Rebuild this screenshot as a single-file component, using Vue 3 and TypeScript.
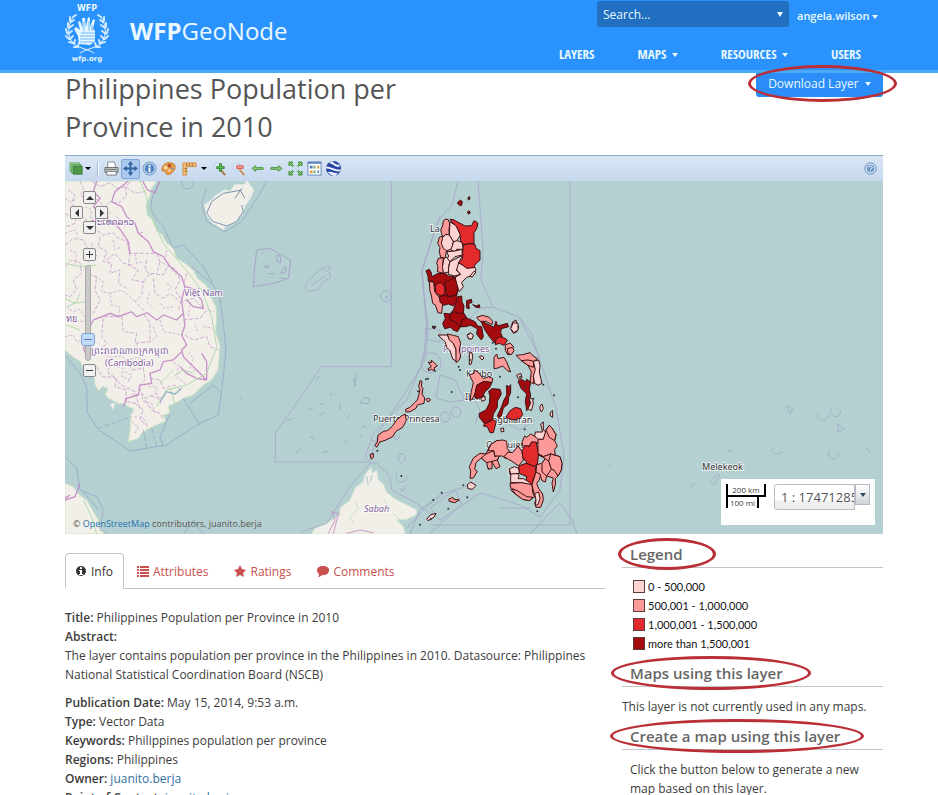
<script setup lang="ts">
import { ref } from 'vue'

interface Region {
  level: number
  points: string
}

const levels = ['#fbd3d3', '#fb9a99', '#e32a2c', '#a50b0e']

const legend = [
  { color: levels[0], label: '0 - 500,000' },
  { color: levels[1], label: '500,001 - 1,000,000' },
  { color: levels[2], label: '1,000,001 - 1,500,000' },
  { color: levels[3], label: 'more than 1,500,001' },
]

const parse = (rows: [number, string][]): Region[] =>
  rows.map(([level, points]) => ({ level, points }))

// Northern provinces
const north = parse([
  [1, '130,122 138,117 145,119 149,130 147,150 148,165 138,163 128,172 125,160 122,150 128,138'],
  [1, '118,172 128,168 130,190 140,210 135,235 122,232 118,215 120,203 113,190'],
  [1, '115,235 130,234 128,260 131,280 112,275 114,260 110,250'],
  [0, '150,125 172,140 176,155 182,165 172,180 170,186 158,183 148,165'],
  [0, '128,172 138,163 148,165 160,185 158,195 155,207 140,212 130,205 124,190'],
  [0, '160,185 172,182 186,187 190,208 170,208 165,215 152,210 158,195'],
  [0, '140,215 165,213 186,208 187,225 165,230 150,245 141,238 146,228'],
  [0, '132,235 140,232 150,245 145,262 148,275 131,280 127,262'],
  [0, '150,245 188,226 176,248 178,262 168,270 182,283 163,288 145,283 146,262'],
  [0, '176,248 200,263 225,262 228,270 215,288 200,292 185,307 190,320 178,335 170,320 165,292 182,283 170,270'],
  [2, '150,118 160,119 195,138 215,137 222,122 228,125 234,130 230,146 222,158 222,192 206,190 192,195 182,183 180,160 168,138 156,126'],
  [2, '190,195 210,191 225,193 228,205 240,212 240,240 225,254 222,263 200,265 188,255 176,248 188,236 188,218'],
  [0, '210,288 222,274 228,276 216,292'],
  [3, '78,272 88,268 93,276 96,290 112,281 136,280 145,288 165,290 166,306 174,325 170,345 150,350 125,350 108,338 104,318 100,303 85,304 84,288'],
  [3, '135,305 150,300 165,292 174,325 170,346 148,350 138,338'],
  [2, '105,320 112,310 122,308 134,320 135,338 125,348 108,342'],
  [1, '88,305 101,306 104,335 116,350 128,372 125,400 114,398 106,375 98,370 94,345 90,335'],
  [3, '118,350 134,345 148,350 170,346 174,366 160,378 145,372 130,376 120,366'],
  [3, '174,350 185,348 186,365 192,378 190,398 200,414 225,425 233,438 245,440 250,470 244,480 230,462 232,446 212,436 196,440 182,440 172,455 160,450 152,442 134,446 128,430 136,416 132,400 150,402 160,390 166,374'],
  [3, '150,402 165,395 180,402 190,398 200,414 186,420 180,440 165,425 150,420'],
  [3, '242,422 262,432 282,442 288,424 293,438 322,430 326,440 304,446 302,458 310,478 292,480 285,490 268,470 255,450'],
  [1, '230,412 248,406 268,412 278,424 276,434 258,424 240,424'],
  [2, '288,478 300,470 318,476 322,482 312,496 298,490 286,494'],
  [1, '316,495 330,489 341,500 334,508 337,520 324,525 316,512'],
  [0, '338,426 348,420 350,432 356,440 350,456 340,460 332,446'],
  [3, '200,362 214,358 216,368 206,370 208,386 200,384'],
  [3, '172,68 182,60 187,66 184,77 176,74'],
  [3, '204,52 209,50 209,58 205,60'],
  [3, '202,96 207,92 211,98 206,103'],
  [3, '218,374 228,378 238,374 240,382 228,382'],
  [3, '98,438 106,440 104,446 98,444'],
  [0, '202,464 210,459 219,464 216,476 206,477'],
])

// Palawan, Visayas and Mindanao
const south = parse([
  [0, '234,45 262,45 268,58 280,70 288,88 290,124 278,117 270,92 260,82 256,66'],
  [1, '262,42 280,46 295,50 302,70 298,90 302,108 298,120 288,128 288,88 280,70 268,60'],
  [1, '205,126 214,128 214,120 226,132 232,138 222,144 226,154 214,148 206,152 204,146 214,140'],
  [1, '176,226 180,208 176,200 180,182 186,184 184,198 189,206 186,222 194,234 192,250 172,255 168,265 150,275 138,276 137,268 150,262 164,248 172,240'],
  [1, '45,376 52,366 54,346 70,334 82,332 96,320 110,300 124,288 136,282 139,302 128,322 108,334 98,350 78,360 60,366 50,382'],
  [1, '198,238 206,234 212,240 204,246'],
  [1, '30,404 40,400 40,412 34,418'],
  [1, '402,112 410,102 414,116 432,112 440,126 452,156 442,152 428,138 414,144 402,146'],
  [0, '328,98 336,98 338,110 334,132 328,134'],
  [0, '358,110 366,107 372,114 366,120'],
  [0, '322,46 332,39 340,46 336,57 326,56'],
  [1, '468,106 488,104 510,98 520,108 532,116 522,124 530,145 520,168 522,192 510,186 514,155 504,136 484,122'],
  [1, '484,122 504,120 522,124 520,142 504,136'],
  [0, '520,124 536,120 540,136 538,156 546,190 534,196 524,190 520,168 526,148'],
  [3, '474,184 484,178 498,186 500,178 512,186 508,208 512,226 508,246 514,264 500,268 496,244 500,222 484,206'],
  [0, '506,232 518,238 520,252 514,272 504,266 512,250'],
  [0, '470,166 482,160 486,172 476,178'],
  [1, '328,165 342,160 342,150 354,156 370,176 386,170 398,176 396,188 372,184 350,196 348,216 336,238 330,242 334,214 340,188'],
  [3, '350,196 372,184 396,188 388,204 376,214 366,232 348,236 344,226'],
  [0, '362,235 374,228 376,240 366,244'],
  [3, '386,214 396,206 420,208 424,222 412,244 412,262 400,282 398,298 384,306 374,312 358,292 358,280 378,270 388,250 390,228'],
  [2, '374,312 386,306 400,298 408,308 400,338 390,338 382,320 370,318'],
  [3, '440,196 446,200 452,194 452,218 446,232 444,252 430,264 424,288 416,294 412,288 424,262 432,240 440,226'],
  [2, '438,292 450,272 466,262 482,266 488,284 480,294 462,300 448,296'],
  [1, '330,475 332,454 328,440 340,414 360,400 378,402 390,376 410,362 424,368 428,392 420,404 412,420 420,440 408,446 396,426 396,446 384,446 380,428 364,414 348,428 344,448 352,454 340,474'],
  [1, '378,402 402,392 404,410 420,404 412,420 396,424 380,428 364,414'],
  [1, '410,362 428,360 440,364 442,386 450,396 438,416 426,408 404,408 402,392 384,392 392,374'],
  [1, '444,396 458,398 474,378 486,394 490,420 476,438 456,424 432,410'],
  [1, '486,366 494,348 500,352 512,342 526,350 536,356 534,370 516,366 508,378 488,378'],
  [2, '486,392 496,376 508,380 514,366 528,366 536,400 532,434 520,440 502,430 494,420 488,410'],
  [0, '524,348 526,336 548,336 542,312 550,306 550,330 558,336 550,358 534,358'],
  [1, '534,358 550,358 558,330 568,316 576,324 588,344 584,362 592,378 584,388 586,408 572,402 550,410 534,400'],
  [1, '558,330 568,316 576,324 588,344 584,362 568,352'],
  [2, '476,438 498,430 526,440 528,460 520,476 516,494 498,486 500,470 478,460'],
  [0, '452,462 468,458 478,466 474,476 490,476 510,488 516,496 484,488 452,488'],
  [0, '448,446 464,440 476,446 478,460 452,462'],
  [1, '450,490 484,488 516,494 518,518 524,530 508,542 488,538 466,522 454,512'],
  [1, '456,506 472,512 500,530 520,532 508,542 488,538 466,522'],
  [1, '534,404 550,410 572,402 600,410 606,430 604,450 594,468 586,476 586,494 580,516 576,490 580,474 560,468 556,486 546,482 540,464 528,456 530,434 546,430 556,416'],
  [1, '572,402 600,410 606,430 604,450 594,468 582,450 574,448 566,424'],
  [1, '546,430 556,416 566,424 574,448 560,468 546,456'],
  [1, '528,456 542,464 538,480 530,490 536,506 548,522 550,540 542,562 528,562 524,548 530,536 522,520 516,494'],
  [0, '524,520 536,516 540,536 534,554 526,556 528,540'],
  [0, '322,494 332,486 348,496 338,508 324,506'],
  [1, '266,538 278,532 282,538 298,540 284,548 268,544'],
  [0, '200,598 212,584 228,580 222,592 204,602'],
  [0, '540,258 546,252 550,266 544,276 540,268'],
  [0, '572,276 578,272 578,292 570,286'],
  [0, '422,326 430,324 432,334 424,336'],
  [1, '442,86 458,82 462,92 454,104 444,100'],
  [0, '460,8 474,10 474,30 462,38 452,26'],
])

const specks = [
  [222, 22], [226, 20], [198, 178], [204, 176], [275, 216], [296, 140], [330, 120], [124, 468],
  [245, 518], [220, 540], [310, 496], [322, 532], [265, 566], [180, 614], [480, 170], [474, 232],
  [550, 194], [582, 226], [532, 574], [52, 392], [212, 598], [420, 170], [495, 200], [386, 446],
  [500, 270], [174, 214], [520, 236], [494, 328], [408, 86], [440, 200], [300, 150], [398, 68],
]

const mainland =
  'M15,-267 L290,-267 L272,-240 L270,-222 L258,-195 L262,-165 L278,-150 L290,-118 L305,-108 L320,-82 L340,-65 L350,-35 L375,-20 L400,0 L412,25 L438,45 L452,80 L468,110 L470,150 L466,185 L480,225 L478,255 L474,300 L455,330 L430,345 L400,375 L370,385 L345,400 L325,408 L330,430 L310,435 L318,452 L290,465 L262,478 L245,490 L235,505 L205,515 L210,480 L212,435 L222,418 L205,410 L190,400 L178,402 L160,392 L145,385 L135,372 L145,355 L128,350 L115,362 L105,345 L100,310 L90,295 L70,300 L62,275 L40,262 L15,240 Z'

const inlandBorders = [
  'M60,-267 L72,-240 L60,-225 L85,-205 L110,-212 L135,-190 L150,-205 L175,-200 L200,-222 L195,-250 L215,-267',
  'M95,-267 L120,-250 L150,-262 L170,-245 L195,-250 L225,-230 L255,-235',
  'M15,-170 L35,-158 L60,-165 L80,-150 L70,-120 L90,-110 L110,-120 L130,-105 L160,-112 L175,-95 L205,-85',
  'M15,-75 L40,-95 L70,-90 L85,-60 L70,-40 L90,-20 L80,10 L110,20 L105,60 L120,90 L100,130',
  'M15,-10 L35,-30 L60,-22 L65,10 L40,30 L50,60 L30,80 L15,75',
  'M120,-100 L115,-70 L140,-55 L130,-25 L155,-20 L150,10 L180,0 L175,40 L200,55',
  'M205,-50 L290,-50 L300,-25 L330,-10 L350,15',
  'M200,-85 L210,-50 L205,-15 L235,0 L215,30 L250,35 L245,75 L225,95 L255,125',
  'M100,150 L130,140 L185,140 L190,185 L230,190 L225,220 L270,215 L270,160 L250,130',
  'M130,145 L125,200 L140,220 L120,240',
  'M250,35 L270,10 L310,15 L325,-15 L350,0 L360,30 L345,60 L365,90 L355,120',
  'M280,25 L285,70 L310,85 L330,70 L360,95 L400,85 L425,110',
  'M380,10 L370,45 L395,60 L420,55',
  'M150,270 L145,310 L170,325 L165,350 L200,360 L195,395 L230,400',
  'M200,270 L215,300 L250,295 L255,330 L235,350 L255,385 L290,370 L300,395',
  'M110,290 L125,320 L160,322 L185,345 L225,365 L240,420',
  'M225,400 L250,420 L240,450 L265,470',
  'M255,390 L275,420 L300,430 L310,450',
  'M270,325 L300,330 L310,355 L345,345 L360,360',
  'M375,195 L400,210 L440,200 L450,230 L475,240',
  'M370,150 L420,145 L440,120 L462,125',
  'M170,-160 L190,-135 L225,-140 L235,-110 L255,-115',
  'M25,-240 L45,-225 L35,-200 L55,-180 L45,-140 L20,-130',
  'M140,-30 L165,-50 L190,-20 L215,-15',
  'M260,-30 L255,0 L275,15 M300,-25 L290,10',
]

const minorBorders = [
  'M15,-215 L30,-205 L50,-212 M75,-190 L95,-180 L90,-155 L115,-150 L125,-135 M150,-175 L140,-150 L155,-140',
  'M15,-110 L45,-120 L55,-100 M30,-60 L50,-50 L45,-15 M95,-80 L100,-50 L115,-40',
  'M160,-90 L165,-60 L185,-70 M225,-50 L230,-20 L250,-25 M320,-60 L315,-30',
  'M20,110 L40,125 L60,118 L75,140 M15,200 L40,195 L50,215 L70,210 M35,150 L60,155 L85,150',
  'M105,20 L130,35 L125,65 L150,70 L155,105 L180,110 L175,138 M150,70 L185,60 L205,75 L225,95',
  'M300,150 L310,185 L340,190 L365,195 M280,170 L290,200 L270,215 M230,220 L240,245 L280,240 L300,255',
  'M115,245 L150,262 L185,258 L200,270 L235,262 L255,275 L250,295 M160,285 L190,295 L185,320 L210,330',
  'M205,280 L220,275 L230,290 M195,305 L215,315 L205,335 M265,350 L290,350 L285,368 M275,380 L305,385 L300,405',
  'M215,375 L245,372 L250,395 L275,400 L285,430 M225,440 L250,445 L260,465 M215,455 L235,470 L225,490',
  'M385,245 L400,265 L390,290 L405,305 M405,165 L415,190 M430,170 L460,175 M390,105 L385,140',
  'M340,110 L310,115 L300,95 M320,40 L335,50 L320,65 M270,70 L260,95 L280,115 M330,270 L355,285 L350,320 L380,345',
]

const nationalBorders = [
  'M248,-267 L262,-240 L285,-232 L300,-267',
  'M205,-267 L165,-235 L155,-205 L185,-190 L200,-160 L225,-140 L235,-110 L265,-85 L280,-55 L310,-40 L330,-10 L365,20 L375,50 L365,90 L370,130 L350,150 L310,135 L290,150 L262,128 L230,140 L215,125 L175,140 L150,130 L100,150 L85,180 L100,205 L70,235 L85,270',
  'M110,-267 L100,-235 L120,-215 L100,-190 L125,-165 L165,-140 L185,-115 L205,-85 L210,-50',
  'M370,130 L375,165 L365,195 L380,225 L365,240 L370,260 L440,330',
  'M440,330 L440,275 L425,250 M365,245 L340,270 L310,275 L300,300 L270,310 L275,340 L240,345 L235,375 L200,385 L190,410',
  'M380,90 L400,110 L430,115 L425,90 L395,55 L375,50',
  'M360,290 L380,310 L410,325 L440,330',
  'M30,675 L15,685 M15,690 L45,680 L60,640',
]

const zoomLevel = ref(83)
const activeTab = ref('Info')
const tabs = ['Info', 'Attributes', 'Ratings', 'Comments']
const pans = ['up', 'left', 'right', 'down']
</script>

<template>
  <div class="page">
    <header class="header">
      <a class="brand" href="#">
        <svg class="logo" viewBox="0 0 46 64" aria-hidden="true">
          <g fill="none" stroke="#dff3ff" stroke-linecap="round">
            <path d="M10,15 C3,23 2,39 13,45 C19,48 26,49 30,52" stroke-width="1" />
            <path d="M36,15 C43,23 44,39 33,45 C27,48 20,49 16,52" stroke-width="1" />
            <path d="M9,16l3,-2M6,20l0,-4M7,21l3,-2M4,26l0,-4M5,27l4,-3M3,32l-1,-4M4,33l4,-3M5,38l-3,-3M6,38l3,-3M9,42l-4,-1M10,43l1,-4M14,46l-4,0M14,45l1,-3" stroke-width="2" opacity="0.9" />
            <path d="M37,16l-3,-2M40,20l0,-4M39,21l-3,-2M42,26l0,-4M41,27l-4,-3M43,32l1,-4M42,33l-4,-3M41,38l3,-3M40,38l-3,-3M37,42l4,-1M36,43l-1,-4M32,46l4,0M32,45l-1,-3" stroke-width="2" opacity="0.9" />
          </g>
          <path d="M15,43 L14,35 L10,28 L12,26 L16,29 L14,21 L16,20 L19,27 L18,17 L21,17 L22,26 L24,16 L26,17 L26,26 L29,18 L31,19 L29,28 L31,30 L31,40 L26,44 Z" fill="#e6f6ff" />
          <path d="M17,32H31M16,35H31M16,38H31M16,41H29" stroke="#6db7fb" stroke-width="1" />
          <path d="M20,20V30M25,20V30M28,24V30" stroke="#6db7fb" stroke-width="1" />
          <text x="23" y="10" text-anchor="middle" class="logo-top">WFP</text>
          <text x="23" y="60" text-anchor="middle" class="logo-bottom">wfp.org</text>
        </svg>
        <span class="site-name"><b>WFP</b>GeoNode</span>
      </a>
      <div class="header-side">
        <div class="user-row">
          <label class="search">
            <input type="text" placeholder="Search..." aria-label="Search" />
            <i class="caret"></i>
          </label>
          <a class="user" href="#">angela.wilson <i class="caret"></i></a>
        </div>
        <nav class="nav">
          <a href="#">LAYERS</a>
          <a href="#">MAPS <i class="caret"></i></a>
          <a href="#">RESOURCES <i class="caret"></i></a>
          <a href="#">USERS</a>
        </nav>
      </div>
    </header>

    <main class="content">
      <div class="title-row">
        <h1>Philippines Population per Province in 2010</h1>
        <div class="marked mark-download">
          <button class="download" type="button">Download Layer <i class="caret"></i></button>
        </div>
      </div>

      <section class="viewer">
        <div class="toolbar">
          <button type="button" class="tool wide" aria-label="Layers">
            <svg viewBox="0 0 16 16"><rect x="1" y="2" width="10" height="9" fill="#a4d3a0" stroke="#6aad69" /><rect x="3" y="4" width="10" height="9" fill="#7fbf7a" stroke="#4f984e" /><rect x="5" y="6" width="9" height="8" fill="#4e9a4d" stroke="#397d3a" /></svg>
            <i class="caret dark"></i>
          </button>
          <span class="separator"></span>
          <button type="button" class="tool" aria-label="Print">
            <svg viewBox="0 0 16 16"><path d="M4,7V1H11L12,3V7" fill="#fff" stroke="#888" /><path d="M1,7H15V12H1Z" fill="#c3c8ce" stroke="#666" /><path d="M3,11H13V15H3Z" fill="#fff" stroke="#777" /><path d="M2,9H14" stroke="#777" /></svg>
          </button>
          <button type="button" class="tool active" aria-label="Pan">
            <svg viewBox="0 0 16 16"><path d="M8,3V13M3,8H13" stroke="#3465a0" stroke-width="2" /><path d="M8,0L11,4H5ZM8,16L5,12H11ZM0,8L4,5V11ZM16,8L12,11V5Z" fill="#3465a0" /></svg>
          </button>
          <button type="button" class="tool" aria-label="Feature information">
            <svg viewBox="0 0 16 16"><circle cx="8" cy="8" r="7" fill="#b8cfe8" stroke="#6f99c8" /><circle cx="8" cy="8" r="5" fill="#4e86c2" /><path d="M7,7H9V12H7ZM7,4H9V6H7Z" fill="#fff" /></svg>
          </button>
          <button type="button" class="tool" aria-label="Styles">
            <svg viewBox="0 0 16 16"><path d="M1,9C1,4 6,1 11,2C16,3 16,8 13,11C11,14 8,15 6,14C4,13 6,11 4,11C2,11 1,11 1,9Z" fill="#e9a04b" stroke="#c37624" /><circle cx="5" cy="7" r="2" fill="#f7dfa9" /><circle cx="9" cy="5" r="2" fill="#b84d2b" /><circle cx="12" cy="8" r="1" fill="#5b8fc5" /><circle cx="9" cy="10" r="1" fill="#fff" /></svg>
          </button>
          <button type="button" class="tool wide measure" aria-label="Measure">
            <svg viewBox="0 0 16 16"><path d="M1,2H15V6H5V15H1Z" fill="#f0b974" stroke="#cf8f43" /><path d="M5,3V5M8,3V5M11,3V5M3,8H5M3,11H5" stroke="#8e5a1d" /></svg>
            <i class="caret dark"></i>
          </button>
          <button type="button" class="tool" aria-label="Zoom in">
            <svg viewBox="0 0 16 16"><circle cx="6" cy="6" r="4" fill="#dcebf7" stroke="#b9cde2" /><path d="M10,10L14,15" stroke="#a87b3d" stroke-width="2" /><path d="M8,3H10V6H13V8H10V11H8V8H5V6H8Z" fill="#5cbb50" stroke="#2f8a31" /></svg>
          </button>
          <button type="button" class="tool" aria-label="Zoom out">
            <svg viewBox="0 0 16 16"><circle cx="6" cy="6" r="4" fill="#dcebf7" stroke="#b9cde2" /><path d="M9,9L14,15" stroke="#cc8e58" stroke-width="2" /><path d="M6,5H13V8H6Z" fill="#f09a94" stroke="#df5a54" /></svg>
          </button>
          <button type="button" class="tool" aria-label="Previous extent">
            <svg viewBox="0 0 16 16"><path d="M2,8L6,5V7H14V9H6V11Z" fill="#8cc97a" stroke="#4a964a" /></svg>
          </button>
          <button type="button" class="tool" aria-label="Next extent">
            <svg viewBox="0 0 16 16"><path d="M14,8L10,5V7H2V9H10V11Z" fill="#8cc97a" stroke="#4a964a" /></svg>
          </button>
          <button type="button" class="tool" aria-label="Full extent">
            <svg viewBox="0 0 16 16" fill="#7dbd6a" stroke="#3f8f3d"><path d="M1,1H5L4,3L6,5L5,6L3,4L1,5ZM15,1V5L13,4L11,6L10,5L12,3L11,1ZM1,15V11L3,12L5,10L6,11L4,13L5,15ZM15,15H11L12,13L10,11L11,10L13,12L15,11Z" /></svg>
          </button>
          <button type="button" class="tool" aria-label="Legend">
            <svg viewBox="0 0 16 16"><rect x="1" y="1" width="14" height="14" fill="#fff" stroke="#5f86b5" /><path d="M1,2H15" stroke="#5f86b5" stroke-width="2" /><path d="M3,5H6V8H3Z" fill="#4b7bc0" /><path d="M7,5H9V8H7ZM7,10H9V13H7Z" fill="#68a95e" /><path d="M11,5H13V8H11ZM3,10H6V13H3Z" fill="#d99b3a" /><path d="M11,10H13V13H11Z" fill="#6f93c4" /></svg>
          </button>
          <button type="button" class="tool" aria-label="3D view">
            <svg viewBox="0 0 16 16"><circle cx="8" cy="8" r="8" fill="#2546a5" /><path d="M0,6C4,5 9,10 16,9L15,11C9,12 4,7 0,8ZM3,2C8,3 10,7 15,6L14,4C10,4 8,2 7,0ZM2,12C6,10 9,14 13,13L10,16C6,16 4,14 2,12Z" fill="#e9f0fb" /></svg>
          </button>
          <button type="button" class="tool help" aria-label="Help">
            <svg viewBox="0 0 16 16"><circle cx="8" cy="8" r="6" fill="#dbe7f4" stroke="#5583b8" /><circle cx="8" cy="8" r="4" fill="#6b97c8" /><path d="M6,7C6,5 10,5 10,7C10,8 8,8 8,9M8,10V11" fill="none" stroke="#fff" /></svg>
          </button>
        </div>

        <div class="map">
          <svg class="map-canvas" viewBox="65 181 818 353" role="img" aria-label="Population map">
            <rect x="65" y="181" width="818" height="353" fill="#b5d0d0" />

            <!-- Indochina -->
            <g transform="translate(60 270) scale(0.33333)">
              <path :d="mainland" fill="#f2efe9" stroke="#c9e3c3" stroke-width="3" />
              <path d="M150,402 L165,398 L160,420 Z" fill="#f2efe9" />
              <path d="M15,640 L40,650 L55,672 L80,690 L100,725 L115,750 L120,775 L135,792 L15,792 Z" fill="#f2efe9" stroke="#c9e3c3" stroke-width="3" />
              <g fill="none" stroke="#c9a6cf" stroke-width="3">
                <path v-for="line in inlandBorders" :key="line" :d="line" stroke-dasharray="12 5" opacity="0.9" />
                <path v-for="line in minorBorders" :key="line" :d="line" stroke-dasharray="8 5" opacity="0.8" />
                <path v-for="line in nationalBorders" :key="line" :d="line" stroke="#c793c8" stroke-width="4" />
              </g>
              <g fill="none" stroke="#b3d9ad" stroke-width="3">
                <path d="M15,85 L45,100 L75,95 M25,110 L50,95 L60,70 M15,-20 L60,-10 L110,-15 M20,165 L60,180" />
                <path d="M240,-267 L255,-235 L275,-160 L310,-80 L370,-10 L425,60 L455,140 L470,230 L440,310 L380,345 L320,360 L290,410 M300,340 L340,300 M330,355 L345,400" />
                <path d="M70,690 L95,740 L110,792 M340,320 L370,300 L400,310" />
              </g>
              <path d="M300,395 L320,365 L345,372 L365,355" fill="none" stroke="#8db0c6" stroke-width="4" />
              <g fill="none" stroke="#96a0c6" stroke-width="3" opacity="0.7">
                <path d="M395,-10 L460,45 L480,85 L490,160 L498,240 L490,320 L475,435 L410,465 L320,525 L210,543 L115,478 L82,430 L80,350 L60,310 L15,255" />
                <path d="M300,-267 C250,-180 280,-165 310,-130 L340,-65 L370,-75 L430,-10 L460,45" />
                <path d="M365,-267 C360,-235 405,-235 400,-267" />
                <path d="M440,-245 L425,-200 L440,-145 L495,-115 L545,-145 L600,-230 L620,-267" />
                <path d="M330,430 L300,500 L308,525 M370,385 L420,465 M390,400 L460,345 L480,365" />
                <path d="M115,475 L215,440 M250,480 L260,535 M275,475 L290,530" stroke-dasharray="14 6" />
                <path d="M15,560 L50,595 L60,660 L110,680 L130,720 L120,780 L145,792 M70,665 L115,720 M370,792 L400,750 L430,792" />
              </g>
              <path d="M440,-165 L435,-195 L455,-210 L470,-225 L495,-240 L510,-235 L525,-255 L555,-255 L560,-268 L580,-240 L570,-215 L555,-195 L545,-165 L520,-140 L495,-130 L490,-122 L460,-140 Z" fill="#f2efe9" stroke="#e6ede6" stroke-width="4" />
              <path d="M440,-170 L455,-205 L490,-230 L545,-240 M545,-245 L525,-215 M540,-240 L555,-215 M545,-195 L550,-175 L530,-145 L500,-132 L460,-145 L440,-170" fill="none" stroke="#7d93b2" stroke-width="3" />
              <g fill="none" stroke="#a195c6" stroke-width="3" opacity="0.7">
                <path d="M590,-60 L630,-65 L692,-30 L685,25 L640,40 L580,50 L582,15 Z" />
                <path d="M650,-45 l12,4 v20 l-10,-4z M660,10 l18,-22 -2,20z M610,-10 l14,-4 2,8z M625,10 l20,2 M605,-48 l6,-2 M660,25 l16,0" />
                <path d="M735,55 C740,20 770,15 785,-5 L808,8 L812,22 L790,35 L775,58 L745,65 Z M785,-5 L810,-10 L808,8 M755,45 L800,15" stroke-dasharray="7 3" />
              </g>
            </g>

            <!-- Borneo and the South China Sea -->
            <g transform="translate(240 180) scale(0.33333)">
              <path d="M215,1062 L225,1045 L260,1030 L300,1005 L300,985 L330,960 L345,925 L370,905 L375,885 L392,862 L398,880 L410,870 L415,900 L430,912 L438,935 L462,955 L490,970 L530,990 L528,1005 L500,1018 L470,1020 L490,1040 L495,1062 Z" fill="#f2efe9" stroke="#d3e6d0" stroke-width="3" />
              <path d="M345,960 L355,985 L330,1010 L340,1030 M430,955 L450,985 M460,1000 L480,1020" fill="none" stroke="#b3d9ad" stroke-width="2" />
              <path d="M265,1060 L285,1020 L275,995 L295,1000 L280,1062 M320,1060 L360,1050 L400,1058" fill="none" stroke="#c79aca" stroke-width="3" />
              <path d="M380,890 L385,915 M395,885 L392,905" fill="none" stroke="#b5d0d0" stroke-width="4" />
              <g fill="none" stroke="#a39fc9" stroke-width="3" opacity="0.7">
                <path d="M454,0 V560 H245 L106,760 V846 H390" />
                <circle cx="438" cy="349" r="16" /><circle cx="440" cy="351" r="3" />
                <path d="M185,1055 L260,1030 L330,920 L390,850 L410,848 L450,890 L455,930 L530,970 L570,1000" />
                <path d="M600,110 L545,270 L560,440 L550,540 L500,660 L400,760 L376,830 L390,846" />
                <path d="M350,580 l-6,38 M340,595 l6,22 M230,600 l8,-12 M360,668 l14,-16 16,4 -8,16z M235,710 l20,-15 M140,722 l18,-6 M205,690 l12,-4 M270,640 l6,8 M300,670 l0,20 M168,820 l12,-14 M245,818 l20,-4 M365,742 l14,-4 M210,770 l14,6 M310,780 l10,10 M360,765 l6,4 M240,670 l10,4 M325,715 l4,-12 M395,780 l10,6" stroke="#8fa0bf" />
                <path d="M475,830 C480,815 500,820 495,840 C485,855 475,850 475,830 M472,880 a16,16 0 1 0 28,8 M480,925 a8,8 0 1 0 12,-8 M465,765 a8,8 0 1 0 10,0" />
                <path d="M0,660 l5,-6 M500,1045 L560,980 L600,950" />
              </g>
            </g>

            <!-- Sea boundaries around the islands -->
            <g fill="none" stroke="#a39fc9" stroke-width="1" opacity="0.7">
              <path d="M570,181 V525 M430,525 H570 M458,181 L452,205 L437,222 L422,272 L428,330 L425,360" />
              <path d="M478,181 L483,248 L481,280 L493,307 L519,317 L531,333 L543,370 L556,408 L564,455 L560,490 L540,517 L520,505 L480,493 L455,510 L430,534" />
              <path d="M493,307 L480,308 L470,318 L478,330 M519,317 L540,358 L524,362 M425,360 L404,395 L380,430 L370,458" />
              <path d="M410,534 L420,510 L440,495 L470,485 M530,534 L545,518 L560,503 L572,520 L577,534 M500,508 L530,508" />
              <circle cx="445" cy="417" r="5" /><circle cx="456" cy="412" r="5" /><circle cx="431" cy="363" r="10" />
              <path d="M440,375 L455,380 L465,400 L450,402 L436,398 Z M425,328 L440,330 L440,342 L428,340 Z M470,390 L480,410 L475,425 M500,420 L520,430 L535,420 M430,508 L455,490 L462,505 L440,520 Z" />
            </g>

            <!-- Palau and nearby reefs -->
            <g fill="none" stroke="#9fa6c6" stroke-width="1" opacity="0.65">
              <path d="M716,475 l-6,6 4,4 6,-10z M774,447 a5,4 0 1 0 8,4 M728,449 a2,2 0 1 0 4,1 M830,450 a5,5 0 1 0 8,2 M787,406 l6,3 -3,5z M817,414 a6,6 0 1 0 12,0 M832,408 a5,5 0 1 0 8,2 M838,424 l6,5 -6,3z M803,506 l5,3" />
              <path d="M866,448 l4,5 M690,487 l5,-4 M606,463 l5,4" />
            </g>

            <g class="labels">
              <text x="430" y="232">La</text>
              <text x="443" y="352" class="country">Philippines</text>
              <text x="466" y="377">Kalibo</text>
              <text x="465" y="400">Iloilo</text>
              <text x="373" y="422">Puerto Princesa</text>
              <text x="488" y="423">Tagbilaran</text>
              <text x="486" y="448">Oroquieta</text>
              <text x="508" y="475">K</text>
              <text x="364" y="512" class="country italic">Sabah</text>
              <text x="702" y="470">Melekeok</text>
              <text x="184" y="296" class="country">Việt Nam</text>
              <text x="105" y="366" class="country">(Cambodia)</text>
              <text x="91" y="354" class="country khmer">ព្រះរាជាណាចក្រកម្ពុជា</text>
              <text x="91" y="225" class="country khmer">ປະເທດລາວ</text>
              <text x="66" y="322" class="country">ทย</text>
            </g>

            <g transform="translate(400 180) scale(0.33333)" stroke="#3b1012" stroke-width="3" stroke-linejoin="round">
              <polygon v-for="r in north" :key="r.points" :points="r.points" :fill="levels[r.level]" />
            </g>
            <g transform="translate(360 320) scale(0.33333)" stroke="#3b1012" stroke-width="3" stroke-linejoin="round">
              <polygon v-for="r in south" :key="r.points" :points="r.points" :fill="levels[r.level]" />
              <circle v-for="([cx, cy], i) in specks" :key="i" :cx="cx" :cy="cy" r="3" fill="#333" stroke="none" />
            </g>
          </svg>

          <button v-for="p in pans" :key="p" type="button" class="map-button" :class="p" :aria-label="'Pan ' + p"></button>
          <button type="button" class="map-button zoom-in" aria-label="Zoom in"></button>
          <input v-model="zoomLevel" class="zoom-slider" type="range" min="0" max="100" aria-label="Zoom level" />
          <button type="button" class="map-button zoom-out" aria-label="Zoom out"></button>
          <p class="attribution">© <a href="#">OpenStreetMap</a> contributors, juanito.berja</p>

          <div class="scale-panel">
            <div class="scale-line">
              <span class="km">200 km</span>
              <span class="mi">100 mi</span>
            </div>
            <div class="scale-select">
              <select aria-label="Scale">
                <option>1 : 17471285</option>
              </select>
              <span class="arrow"><i class="caret"></i></span>
            </div>
          </div>
        </div>
      </section>

      <div class="columns">
        <section class="details">
          <div class="tabs" role="tablist">
            <button
              v-for="tab in tabs"
              :key="tab"
              type="button"
              role="tab"
              class="tab"
              :class="{ current: tab === activeTab }"
              :aria-selected="tab === activeTab"
              @click="activeTab = tab"
            >
              <svg v-if="tab === 'Info'" viewBox="0 0 12 12"><circle cx="6" cy="6" r="5" fill="currentColor" /><path d="M5,2H7V4H5ZM4,5H7V9H8V10H4V9H5V6H4Z" fill="#fff" /></svg>
              <svg v-else-if="tab === 'Attributes'" viewBox="0 0 12 12" fill="currentColor"><path d="M0,1H2V3H0ZM3,1H12V3H3ZM0,4H2V6H0ZM3,4H12V6H3ZM0,7H2V9H0ZM3,7H12V9H3ZM0,10H2V12H0ZM3,10H12V12H3Z" /></svg>
              <svg v-else-if="tab === 'Ratings'" viewBox="0 0 12 12" fill="currentColor"><path d="M6,0L8,4L12,5L9,8L10,12L6,10L2,12L3,8L0,5L4,4Z" /></svg>
              <svg v-else viewBox="0 0 12 12" fill="currentColor"><path d="M6,1C10,1 12,3 12,5C12,8 10,10 6,10C5,10 3,12 1,12C2,11 2,10 2,9C1,8 0,7 0,5C0,3 2,1 6,1Z" /></svg>
              {{ tab }}
            </button>
          </div>
          <div class="info">
            <p>
              <b>Title:</b> Philippines Population per Province in 2010<br />
              <b>Abstract:</b><br />
              The layer contains population per province in the Philippines in 2010. Datasource: Philippines National Statistical Coordination Board (NSCB)
            </p>
            <p>
              <b>Publication Date:</b> May 15, 2014, 9:53 a.m.<br />
              <b>Type:</b> Vector Data<br />
              <b>Keywords:</b> Philippines population per province<br />
              <b>Regions:</b> Philippines<br />
              <b>Owner:</b> <a href="#">juanito.berja</a><br />
              <b>Point of Contact:</b> <a href="#">juanito.berja</a>
            </p>
          </div>
        </section>

        <aside class="side">
          <h2><span class="marked mark-legend">Legend</span></h2>
          <ul class="legend">
            <li v-for="item in legend" :key="item.label">
              <i class="swatch" :style="{ background: item.color }"></i>{{ item.label }}
            </li>
          </ul>
          <h2><span class="marked mark-maps">Maps using this layer</span></h2>
          <p class="note">This layer is not currently used in any maps.</p>
          <h2><span class="marked mark-create">Create a map using this layer</span></h2>
          <p class="note indented">Click the button below to generate a new map based on this layer.</p>
        </aside>
      </div>
    </main>
  </div>
</template>

<style>
body {
  background: #fff;
}
</style>

<style scoped>
.page {
  height: 100vh;
  overflow: hidden;
  font-family: 'Open Sans', 'Noto Sans', sans-serif;
  font-size: 12px;
  line-height: 19px;
  color: #3c3c3c;
}
.page * {
  box-sizing: border-box;
}
a {
  color: #2f6f9f;
  text-decoration: none;
}
button,
input,
select {
  font: inherit;
  margin: 0;
  padding: 0;
  border: 0;
  background: none;
}
.caret {
  display: inline-block;
  border: 4px solid transparent;
  border-top-color: currentColor;
  border-bottom: 0;
  vertical-align: middle;
}
.caret.dark {
  border-width: 3px;
  border-bottom: 0;
  border-top-color: #000;
}

/* Header */
.header {
  display: flex;
  justify-content: space-between;
  height: 73px;
  padding: 0 60px 0 64px;
  background: #2a92fc;
  border-bottom: 3px solid #4aaaf3;
}
.brand {
  display: flex;
  align-items: center;
  gap: 20px;
  color: #e9f8ff;
}
.logo {
  width: 46px;
  height: 64px;
  margin-bottom: 4px;
}
.logo text {
  fill: #e6f6ff;
  font-family: 'DejaVu Sans', sans-serif;
  font-weight: bold;
  font-size: 8px;
}
.logo .logo-bottom {
  font-size: 7px;
}
.site-name {
  font-size: 24px;
  line-height: 36px;
  padding-bottom: 8px;
}
.header-side {
  width: 319px;
}
.user-row {
  display: flex;
  align-items: center;
  justify-content: flex-end;
  gap: 8px;
  height: 28px;
}
.search {
  display: flex;
  align-items: center;
  width: 192px;
  height: 26px;
  padding: 0 6px;
  border-radius: 3px;
  background: #206fc0;
  color: #e9f8ff;
}
.search input {
  flex: 1;
  min-width: 0;
  color: inherit;
  outline: 0;
}
.search input::placeholder {
  color: #e9f8ff;
  opacity: 1;
}
.search .caret {
  border-width: 3px;
  border-top-width: 5px;
  border-bottom: 0;
}
.user {
  width: 81px;
  padding-top: 2px;
  white-space: nowrap;
  font-size: 11px;
  font-weight: 600;
  color: #e9f8ff;
}
.user .caret {
  border-width: 3px;
  border-top-width: 4px;
  border-bottom: 0;
}
.nav {
  display: flex;
  justify-content: space-between;
  padding: 16px 17px 0 0;
}
.nav a {
  color: #e9f8ff;
  font-family: 'Liberation Sans Narrow', 'Open Sans Condensed', 'Liberation Sans', sans-serif;
  font-size: 13px;
  font-weight: bold;
  line-height: 20px;
  white-space: nowrap;
}
.nav .caret {
  margin-left: 2px;
  border-width: 3px;
  border-top-width: 4px;
  border-bottom: 0;
}

/* Title */
.content {
  padding: 0 55px 0 65px;
}
.title-row {
  display: flex;
  justify-content: space-between;
  align-items: flex-start;
  height: 82px;
}
h1 {
  width: 50%;
  margin: -3px 0 0;
  font-size: 27px;
  font-weight: 400;
  line-height: 38px;
  color: #555;
}
.download {
  height: 24px;
  width: 127px;
  padding-bottom: 4px;
  border-radius: 0 0 3px 3px;
  background: #2a8df8;
  color: #e9f8ff;
}
.download .caret {
  margin-left: 3px;
  border-width: 3px;
  border-top-width: 4px;
  border-bottom: 0;
}

/* Red ellipses drawn round the highlighted items */
.marked {
  position: relative;
}
.marked::after {
  content: '';
  position: absolute;
  border: 3px solid #b92f35;
  border-radius: 50%;
  pointer-events: none;
}
.mark-download::after {
  inset: -8px -14px -5px -8px;
}
.mark-legend::after {
  inset: -6px -33px -6px -12px;
}
.mark-maps::after {
  inset: -7px -28px -7px -19px;
}
.mark-create::after {
  inset: -7px -24px -7px -20px;
}

/* Viewer */
.toolbar {
  display: flex;
  align-items: center;
  height: 26px;
  padding: 0 3px 0 2px;
  border-top: 1px solid #86a9d2;
  background: linear-gradient(#dae6f5, #c6d8ee);
}
.tool {
  display: flex;
  align-items: center;
  justify-content: center;
  width: 19px;
  height: 20px;
  border: 1px solid transparent;
  border-radius: 2px;
}
.tool svg {
  flex: none;
  width: 15px;
  height: 15px;
}
.tool.wide {
  width: 26px;
  gap: 1px;
}
.tool.measure {
  width: 32px;
  gap: 4px;
}
.tool.active {
  border-color: #7fa8d8;
  background: #a9c9ef;
}
.tool.help {
  margin-left: auto;
}
.separator {
  width: 2px;
  height: 14px;
  margin: 0 3px 0 4px;
  border-left: 1px solid #9dbbdd;
  background: #fff;
}
.map {
  position: relative;
  overflow: hidden;
  background: #b5d0d0;
}
.map-canvas {
  display: block;
  width: 100%;
}
.labels text {
  font-family: 'Noto Sans', 'DejaVu Sans', sans-serif;
  font-size: 9px;
  fill: #333;
  stroke: #fff;
  stroke-width: 2px;
  stroke-opacity: 0.7;
  paint-order: stroke;
}
.labels .country {
  fill: #8461a0;
}
.labels .italic {
  font-style: italic;
}
.labels .khmer {
  font-size: 9px;
}
.map-button {
  position: absolute;
  display: grid;
  place-items: center;
  left: 18px;
  width: 13px;
  height: 13px;
  border: 1px solid #888;
  border-radius: 2px;
  background: #f1f1f1;
}
.map-button::before {
  content: '';
  border: 4px solid transparent;
}
.up {
  top: 10px;
}
.up::before {
  border-bottom-color: #333;
  border-top: 0;
}
.down {
  top: 40px;
}
.down::before {
  border-top-color: #333;
  border-bottom: 0;
}
.left {
  top: 25px;
  left: 5px;
}
.left::before {
  border-right-color: #333;
  border-left: 0;
}
.right {
  top: 25px;
  left: 30px;
}
.right::before {
  border-left-color: #333;
  border-right: 0;
}
.zoom-in {
  top: 67px;
}
.zoom-out {
  top: 183px;
}
.zoom-in::before,
.zoom-out::before {
  width: 7px;
  height: 7px;
  border: 0;
  background: linear-gradient(#333, #333) center / 7px 1px no-repeat;
}
.zoom-in::before {
  background: linear-gradient(#333, #333) center / 7px 1px no-repeat, linear-gradient(#333, #333) center / 1px 7px no-repeat;
}
.zoom-slider {
  position: absolute;
  top: 84px;
  left: 16px;
  width: 14px;
  height: 96px;
  appearance: none;
  writing-mode: vertical-lr;
}
.zoom-slider::-webkit-slider-runnable-track {
  width: 6px;
  height: 96px;
  border: 1px solid #aaa;
  border-radius: 3px;
  background: #c9c9c9;
}
.zoom-slider::-webkit-slider-thumb {
  appearance: none;
  width: 14px;
  height: 13px;
  margin-left: -5px;
  border: 1px solid #7fa3d6;
  border-radius: 3px;
  background: linear-gradient(#4f7fc0, #4f7fc0) center / 8px 1px no-repeat, #c0dafa;
}
.attribution {
  position: absolute;
  left: 8px;
  bottom: 4px;
  margin: 0;
  font-family: 'Open Sans', sans-serif;
  font-size: 9px;
  line-height: 12px;
  color: #555;
}
.attribution a {
  color: #1f72b0;
}
.scale-panel {
  position: absolute;
  right: 8px;
  bottom: 9px;
  display: flex;
  gap: 8px;
  width: 154px;
  height: 46px;
  padding: 5px;
  background: #fff;
}
.scale-line {
  display: flex;
  flex-direction: column;
  align-items: flex-start;
  font-size: 8px;
  line-height: 11px;
  text-align: center;
}
.km,
.mi {
  border: 2px solid #000;
  white-space: nowrap;
}
.km {
  width: 40px;
  border-top: 0;
}
.mi {
  width: 33px;
  margin-top: -2px;
  border-bottom: 0;
}
.scale-select {
  display: flex;
  flex: 1;
  min-width: 0;
}
.scale-select select {
  flex: 1;
  min-width: 0;
  height: 26px;
  padding: 0 0 0 6px;
  border: 1px solid #bbb;
  border-radius: 3px 0 0 3px;
  background: linear-gradient(#fff 0%, #fff 60%, #eee 70%, #eee 100%);
  appearance: none;
  font-size: 13px;
  color: #555;
}
.arrow {
  display: flex;
  align-items: center;
  justify-content: center;
  width: 15px;
  height: 21px;
  border: 1px solid #b5b8c8;
  background: linear-gradient(#fff, #d0d4da);
}
.arrow .caret {
  border-width: 3px;
  border-top-width: 4px;
  border-bottom: 0;
  color: #34495e;
}

/* Lower columns */
.columns {
  display: grid;
  grid-template-columns: minmax(0, 540fr) minmax(0, 261fr);
  gap: 17px;
}
.tabs {
  display: flex;
  height: 36px;
  margin-top: 19px;
  border-bottom: 1px solid #c5c5c5;
}
.tab {
  display: flex;
  align-items: center;
  gap: 4px;
  height: 36px;
  padding: 0 12px;
  border: 1px solid transparent;
  color: #c9504c;
}
.tab svg {
  width: 12px;
  height: 12px;
}
.tab.current {
  padding: 0 10px 0 9px;
  border-color: #c5c5c5;
  border-bottom-color: #fff;
  border-radius: 4px 4px 0 0;
  background: #fff;
  color: #333;
}
.info {
  padding-top: 19px;
}
.info p {
  margin: 0 0 9px;
}
.info b {
  font-weight: 600;
}
h2 {
  margin: 0;
  padding: 0 8px 3px;
  border-bottom: 1px solid #c5c5c5;
  font-size: 15px;
  line-height: 20px;
  font-weight: 600;
  color: #666;
}
.side {
  padding-top: 10px;
}
.legend {
  margin: 0 0 10px;
  padding: 9px 0 0 11px;
  list-style: none;
  font-family: Lato, sans-serif;
  font-size: 11px;
  color: #111;
}
.legend li {
  display: flex;
  align-items: center;
  gap: 3px;
  height: 19px;
}
.swatch {
  width: 12px;
  height: 13px;
  border: 1px solid #5d3b3b;
}
.note {
  margin: 0;
  padding: 10px 0;
}
.indented {
  padding: 10px 8px;
}
</style>
